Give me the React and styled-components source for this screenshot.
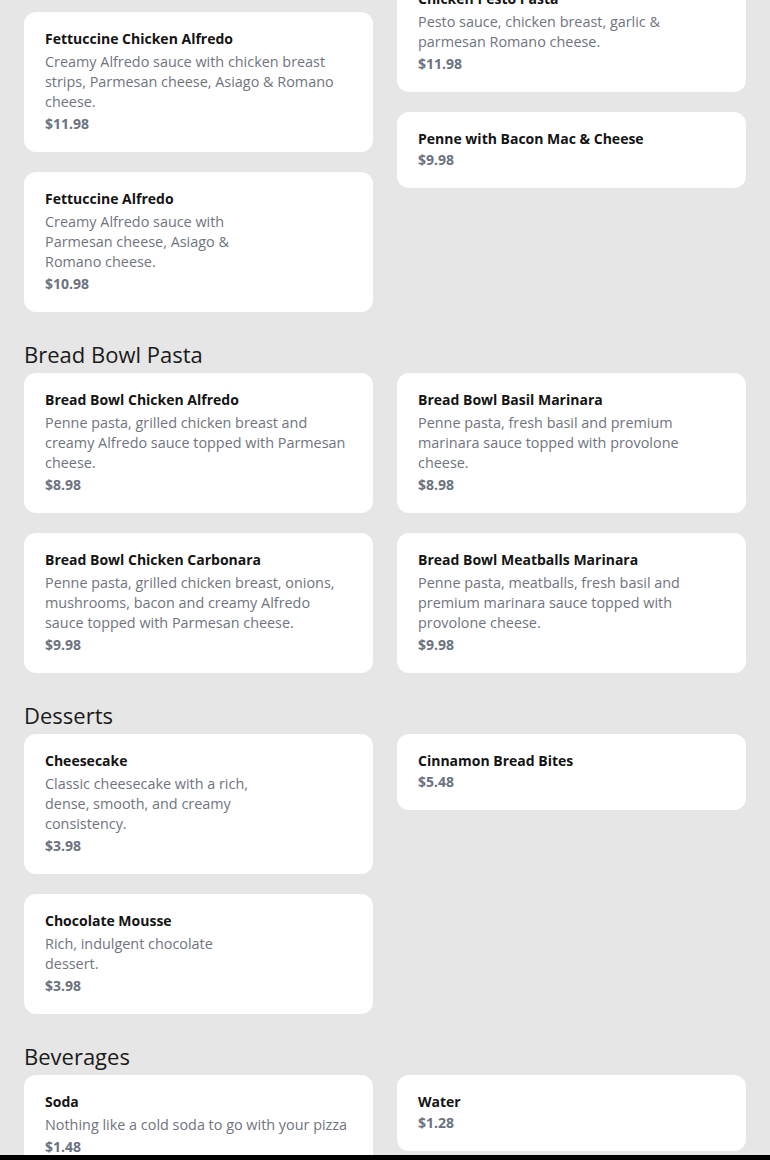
import React from "react";
import styled, { createGlobalStyle } from "styled-components";

const GlobalStyle = createGlobalStyle`
  html, body {
    margin: 0;
    padding: 0;
    background: #e6e6e6;
    font-family: "Open Sans", "Liberation Sans", sans-serif;
    color: #1a1a1a;
    overflow: hidden;
  }
  * { box-sizing: border-box; }
`;

const Page = styled.main`
  /* emulates the page being scrolled part way down the menu */
  margin-top: -209px;
  padding: 0 24px 40px;
`;

const Section = styled.section`
  padding-top: 27px;
`;

const Heading = styled.h2`
  margin: 0 0 4px;
  font-size: 22px;
  line-height: 30px;
  font-weight: 400;
  color: #1a1a1a;
`;

const Columns = styled.div`
  display: grid;
  grid-template-columns: 1fr 1fr;
  column-gap: 24px;
  align-items: start;
`;

const Column = styled.div`
  display: flex;
  flex-direction: column;
  gap: 20px;
`;

const Card = styled.article`
  display: flex;
  flex-direction: column;
  background: #ffffff;
  border-radius: 12px;
  padding: 17px 21px 18px;
`;

const Title = styled.h3`
  margin: 0 0 1px;
  font-size: 14px;
  line-height: 20px;
  font-weight: 700;
  color: #141414;
`;

const Desc = styled.p`
  margin: 2px 0 2px;
  font-size: 14.4px;
  line-height: 20px;
  font-weight: 400;
  color: #6f7480;
  max-width: ${(p) => (p.$narrow ? "215px" : "none")};
`;

const Price = styled.div`
  font-size: 14px;
  line-height: 20px;
  font-weight: 700;
  color: #6b7280;
`;

const BottomBar = styled.div`
  position: fixed;
  left: 0;
  right: 0;
  bottom: 0;
  height: 5px;
  background: #000;
`;

const menu = [
  {
    name: "Pasta",
    items: [
      { title: "Chicken Parmesan Penne", desc: "Penne pasta with breaded chicken, marinara sauce and melted mozzarella and provolone cheese.", price: "$11.98" },
      { title: "Penne Marinara", desc: "Penne pasta with classic marinara.", price: "$8.98" },
      { title: "Fettuccine Chicken Alfredo", desc: "Creamy Alfredo sauce with chicken breast strips, Parmesan cheese, Asiago & Romano cheese.", price: "$11.98" },
      { title: "Chicken Pesto Pasta", desc: "Pesto sauce, chicken breast, garlic & parmesan Romano cheese.", price: "$11.98" },
      { title: "Fettuccine Alfredo", desc: "Creamy Alfredo sauce with Parmesan cheese, Asiago & Romano cheese.", price: "$10.98", narrow: true },
      { title: "Penne with Bacon Mac & Cheese", price: "$9.98" },
    ],
  },
  {
    name: "Bread Bowl Pasta",
    items: [
      { title: "Bread Bowl Chicken Alfredo", desc: "Penne pasta, grilled chicken breast and creamy Alfredo sauce topped with Parmesan cheese.", price: "$8.98" },
      { title: "Bread Bowl Basil Marinara", desc: "Penne pasta, fresh basil and premium marinara sauce topped with provolone cheese.", price: "$8.98" },
      { title: "Bread Bowl Chicken Carbonara", desc: "Penne pasta, grilled chicken breast, onions, mushrooms, bacon and creamy Alfredo sauce topped with Parmesan cheese.", price: "$9.98" },
      { title: "Bread Bowl Meatballs Marinara", desc: "Penne pasta, meatballs, fresh basil and premium marinara sauce topped with provolone cheese.", price: "$9.98" },
    ],
  },
  {
    name: "Desserts",
    items: [
      { title: "Cheesecake", desc: "Classic cheesecake with a rich, dense, smooth, and creamy consistency.", price: "$3.98", narrow: true },
      { title: "Cinnamon Bread Bites", price: "$5.48" },
      { title: "Chocolate Mousse", desc: "Rich, indulgent chocolate dessert.", price: "$3.98", narrow: true },
    ],
  },
  {
    name: "Beverages",
    items: [
      { title: "Soda", desc: "Nothing like a cold soda to go with your pizza", price: "$1.48" },
      { title: "Water", price: "$1.28" },
    ],
  },
];

function MenuCard({ item }) {
  return (
    <Card>
      <Title>{item.title}</Title>
      {item.desc && <Desc $narrow={item.narrow}>{item.desc}</Desc>}
      <Price>{item.price}</Price>
    </Card>
  );
}

export default function App() {
  return (
    <>
      <GlobalStyle />
      <Page>
        {menu.map((section) => {
          const left = section.items.filter((_, i) => i % 2 === 0);
          const right = section.items.filter((_, i) => i % 2 === 1);
          return (
            <Section key={section.name}>
              <Heading>{section.name}</Heading>
              <Columns>
                <Column>
                  {left.map((it) => (
                    <MenuCard key={it.title} item={it} />
                  ))}
                </Column>
                <Column>
                  {right.map((it) => (
                    <MenuCard key={it.title} item={it} />
                  ))}
                </Column>
              </Columns>
            </Section>
          );
        })}
      </Page>
      <BottomBar />
    </>
  );
}
